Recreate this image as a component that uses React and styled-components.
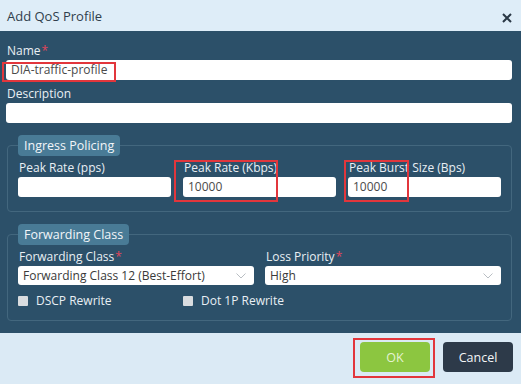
import React from "react";
import styled, { createGlobalStyle } from "styled-components";

const Global = createGlobalStyle`
  html, body { margin: 0; padding: 0; }
  body { font-family: "Open Sans", "Liberation Sans", sans-serif; }
  * { box-sizing: border-box; }
`;

const Dialog = styled.div`
  width: 521px;
  height: 384px;
  display: flex;
  flex-direction: column;
  background: #dcebf6;
`;

const Header = styled.div`
  height: 31px;
  display: flex;
  align-items: center;
  justify-content: space-between;
  padding: 0 9px 0 7px;
  background: #deedf8;
  color: #2f3e4c;
  font-size: 13px;
`;

const Close = styled.svg`
  width: 10px;
  height: 10px;
  margin-top: 4px;
`;

const Body = styled.div`
  flex: 1;
  background: #2c5069;
  padding: 12px 9px 0 6px;
  display: flex;
  flex-direction: column;
`;

const Field = styled.div`
  position: relative;
  display: flex;
  flex-direction: column;
  margin-top: ${(p) => p.$top || 0}px;
`;

const Label = styled.label`
  color: #e9eff4;
  font-size: 12px;
  line-height: 16px;
  padding-left: 1px;
  margin-bottom: 1px;
`;

const Star = styled.span`
  color: #e2455a;
  margin-left: 1px;
`;

const Input = styled.div`
  height: ${(p) => p.$h || 20}px;
  background: #fff;
  border-radius: 3px;
  color: #4a4a4a;
  font-size: 12px;
  line-height: ${(p) => p.$h || 20}px;
  padding-left: 5px;
`;

const Select = styled(Input)`
  display: flex;
  align-items: center;
  justify-content: space-between;
  padding-right: 8px;
  color: #3a3a3a;
`;

const Group = styled.fieldset`
  margin: 12px 0 0 1px;
  border: 1px solid #43677e;
  border-radius: 4px;
  padding: 4px 10px ${(p) => p.$pb || 14}px 10px;
  min-width: 0;
`;

const Legend = styled.legend`
  background: #497b96;
  color: #f2f6f9;
  font-size: 12.5px;
  line-height: 21px;
  padding: 0 6px;
  border-radius: 4px;
  margin-left: 0;
`;

const Row = styled.div`
  display: grid;
  grid-template-columns: repeat(${(p) => p.$cols}, 1fr);
  column-gap: ${(p) => p.$gap}px;
`;

const Checks = styled.div`
  display: grid;
  grid-template-columns: 165px 1fr;
  margin-top: 10px;
`;

const Check = styled.div`
  display: flex;
  align-items: center;
  gap: 8px;
  color: #e9eff4;
  font-size: 12px;
  line-height: 12px;
`;

const Box = styled.span`
  width: 10px;
  height: 10px;
  background: #d9dcdf;
  border-radius: 1px;
`;

const Footer = styled.div`
  height: 51px;
  display: flex;
  justify-content: flex-end;
  align-items: flex-start;
  gap: 13px;
  padding: 9px 8px 0 0;
  background: #dbeaf5;
`;

const Button = styled.div`
  position: relative;
  width: 70px;
  height: 30px;
  border-radius: 4px;
  background: ${(p) => (p.$primary ? "#8cc640" : "#2d3a49")};
  color: ${(p) => (p.$primary ? "#e4f3d2" : "#f3f5f7")};
  font-size: 12.5px;
  display: flex;
  align-items: center;
  justify-content: center;
`;

const Highlight = styled.span`
  position: absolute;
  left: ${(p) => p.$x}px;
  top: ${(p) => p.$y}px;
  width: ${(p) => p.$w}px;
  height: ${(p) => p.$h}px;
  border: 2px solid #e2363c;
  pointer-events: none;
`;

const Chevron = () => (
  <svg width="10" height="6" viewBox="0 0 10 6">
    <path d="M0.5 0.5 L5 5 L9.5 0.5" fill="none" stroke="#b9bec3" strokeWidth="1" />
  </svg>
);

export default function App() {
  return (
    <Dialog>
      <Global />
      <Header>
        <span>Add QoS Profile</span>
        <Close viewBox="0 0 10 10">
          <path d="M1 1 L9 9 M9 1 L1 9" stroke="#2a3846" strokeWidth="2" />
        </Close>
      </Header>
      <Body>
        <Field>
          <Label>
            Name<Star>*</Star>
          </Label>
          <Input>DIA-traffic-profile</Input>
          <Highlight $x={-4} $y={19} $w={114} $h={20} />
        </Field>
        <Field $top={6}>
          <Label>Description</Label>
          <Input />
        </Field>

        <Group>
          <Legend>Ingress Policing</Legend>
          <Row $cols={3} $gap={12}>
            <Field>
              <Label>Peak Rate (pps)</Label>
              <Input />
            </Field>
            <Field>
              <Label>Peak Rate (Kbps)</Label>
              <Input>10000</Input>
              <Highlight $x={-9} $y={0} $w={104} $h={42} />
            </Field>
            <Field>
              <Label>Peak Burst Size (Bps)</Label>
              <Input>10000</Input>
              <Highlight $x={-4} $y={0} $w={65} $h={42} />
            </Field>
          </Row>
        </Group>

        <Group $pb={13}>
          <Legend>Forwarding Class</Legend>
          <Row $cols={2} $gap={11}>
            <Field>
              <Label>
                Forwarding Class<Star>*</Star>
              </Label>
              <Select $h={19}>
                <span>Forwarding Class 12 (Best-Effort)</span>
                <Chevron />
              </Select>
            </Field>
            <Field>
              <Label>
                Loss Priority<Star>*</Star>
              </Label>
              <Select $h={19}>
                <span>High</span>
                <Chevron />
              </Select>
            </Field>
          </Row>
          <Checks>
            <Check>
              <Box />
              DSCP Rewrite
            </Check>
            <Check>
              <Box />
              Dot 1P Rewrite
            </Check>
          </Checks>
        </Group>
      </Body>
      <Footer>
        <Button $primary>
          OK
          <Highlight $x={-7} $y={-4} $w={82} $h={40} />
        </Button>
        <Button>Cancel</Button>
      </Footer>
    </Dialog>
  );
}
